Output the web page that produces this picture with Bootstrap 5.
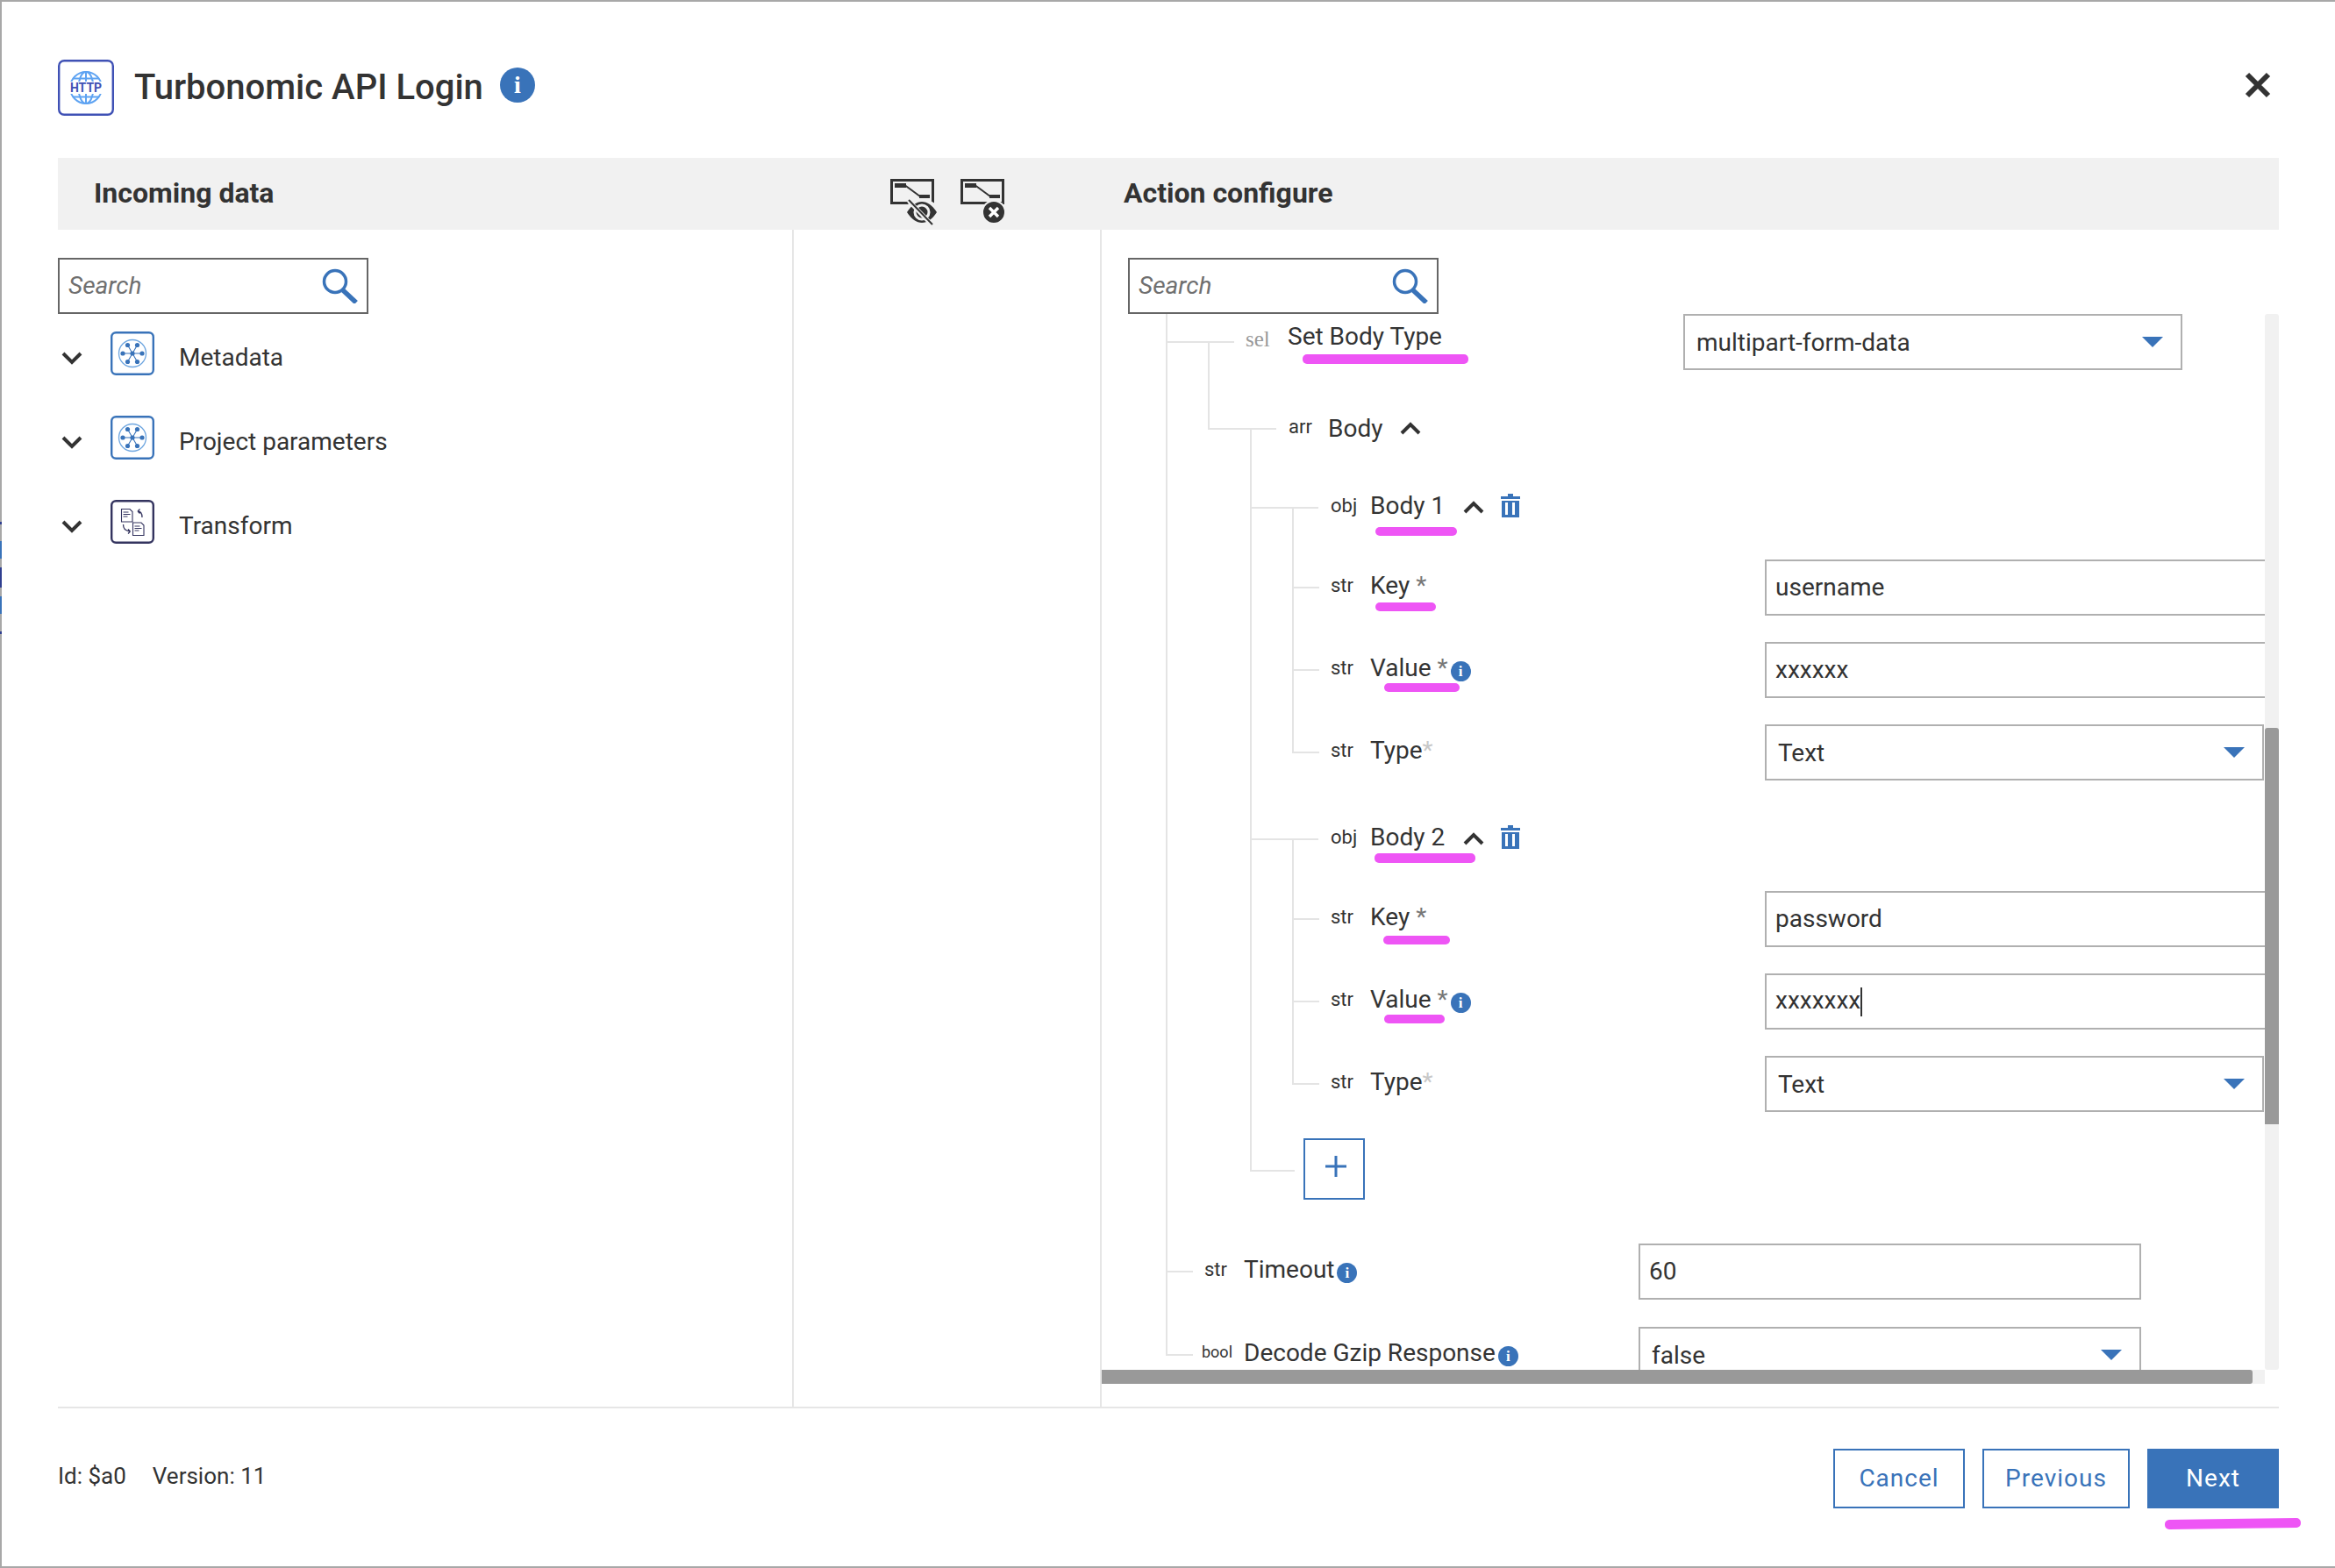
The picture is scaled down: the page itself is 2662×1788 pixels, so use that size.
<!DOCTYPE html>
<html lang="en">
<head>
  <meta charset="UTF-8">
  <title>Turbonomic API Login</title>
  <meta name="viewport" content="width=device-width, initial-scale=1">
  <link href="https://cdn.jsdelivr.net/npm/bootstrap@5.3.2/dist/css/bootstrap.min.css" rel="stylesheet" />
  <style>
    body {
      margin: 0;
      padding: 2px 0 2px 2px;
      height: 100vh;
      font-family: Roboto, "Liberation Sans", sans-serif;
      font-size: 28px;
      color: #333;
      background:
        linear-gradient(#a8a8a8 595px, #2f3f8f 595px, #2f3f8f 598px, #a8a8a8 598px, #a8a8a8 617px, #3973b9 617px, #3973b9 637px, #a8a8a8 637px, #a8a8a8 647px, #2f3f8f 647px, #2f3f8f 670px, #a8a8a8 670px, #a8a8a8 680px, #3973b9 680px, #3973b9 700px, #a8a8a8 700px, #a8a8a8 720px, #2f3f8f 720px, #2f3f8f 723px, #a8a8a8 723px) left top / 2px 100% no-repeat,
        #a8a8a8;
    }
    .dialog-shell {
      height: 100%;
      padding: 0 64px;
      background: #fff;
    }
    .dialog-head { height: 178px; padding-top: 66px; flex: none; }
    .dialog-title { font-size: 40px; font-weight: 500; margin: 0 0 0 23px; color: #333; line-height: 64px; }
    .info-dot {
      display: inline-flex;
      align-items: center;
      justify-content: center;
      flex: none;
      width: 23px;
      height: 23px;
      border-radius: 50%;
      background: #3973b9;
      color: #fff;
      font-family: "Liberation Serif", serif;
      font-weight: 700;
      font-size: 17px;
      line-height: 1;
    }
    .info-dot-lg { width: 40px; height: 40px; font-size: 28px; margin: 9px 0 0 19px; }
    .close-x { margin: 14px 9px 0 auto; }

    .head-band { height: 82px; flex: none; background: #f1f1f1; padding-left: 41px; position: relative; }
    .band-title { font-size: 32px; font-weight: 700; line-height: 80px; color: #333; margin: 0; }
    .band-left { width: 908px; }
    .band-tools { padding-top: 24px; gap: 26px; width: 266px; }

    .panes { flex: 1 1 auto; min-height: 0; border-bottom: 2px solid #e6e6e6; }
    .pane-left { width: 839px; flex: none; border-right: 2px solid #e6e6e6; padding-top: 32px; }
    .pane-mid { width: 351px; flex: none; border-right: 2px solid #e6e6e6; }
    .pane-right { flex: 1 1 auto; min-width: 0; padding: 32px 0 26px; }

    .search-box { width: 354px; height: 64px; flex: none; border: 2px solid #666; padding: 0 9px 0 0; background: #fff; }
    .search-box .form-control { border: 0; border-radius: 0; box-shadow: none; padding: 0 0 0 10px; font-size: 28px; font-style: italic; color: #333; background: transparent; }
    .search-box .form-control::placeholder { color: #6f6f6f; opacity: 1; }
    .search-right { margin-left: 30px; }

    .source-row { height: 50px; margin-bottom: 46px; padding-left: 4px; }
    .source-list { margin-top: 20px; }
    .source-row svg.chev { margin: 10px 32px 0 0; }
    .source-name { margin: 9px 0 0 28px; }

    .tree-view { flex: 1 1 auto; min-width: 0; overflow: hidden; padding-left: 73px; }
    .tree-list { list-style: none; margin: 0; padding: 0; position: relative; width: 1400px; }
    .tree-node { position: relative; padding-bottom: 30px; }
    .tree-node:last-child { padding-bottom: 0; }
    .tree-node::before {
      content: "";
      position: absolute;
      left: 0;
      top: 0;
      width: 31px;
      height: 33px;
      border-left: 2px solid #e4e4e4;
      border-bottom: 2px solid #e4e4e4;
    }
    .tree-node.elbow-long::before { width: 78px; }
    .tree-node.elbow-add::before { width: 51px; height: 38px; }
    .tree-node:not(:last-child)::after {
      content: "";
      position: absolute;
      left: 0;
      top: 0;
      bottom: 0;
      border-left: 2px solid #e4e4e4;
    }
    .sub-list { margin: -32px 0 0 48px; padding-top: calc(32px + var(--lead)); }
    .sub-list::before {
      content: "";
      position: absolute;
      left: 0;
      top: 0;
      height: calc(32px + var(--lead));
      border-left: 2px solid #e4e4e4;
    }
    .lead-35 { --lead: 35px; }
    .lead-26 { --lead: 26px; }
    .lead-27 { --lead: 27px; }
    .pad-35 { padding-bottom: 35px !important; }
    .pad-30 { padding-bottom: 30px !important; }
    .pad-50 { padding-bottom: 50px !important; }
    .pad-31 { padding-bottom: 31px !important; }

    .tree-row { position: relative; height: 64px; padding-left: 44px; }
    .tree-row.long { padding-left: 92px; }
    .tree-row.sel-row { padding-left: 91px; }
    .kind-tag { width: 45px; flex: none; font-size: 22px; color: #333; margin-bottom: 5px; }
    .kind-sel { width: 48px; font-family: "Liberation Serif", serif; font-size: 25px; color: #999; margin-bottom: 6px; }
    .kind-bool { width: 48px; margin-left: -3px; font-size: 18px; margin-bottom: 8px; }
    .row-text { width: 450px; flex: none; margin-bottom: 4px; }
    .sel-row .row-text { width: 451px; margin-bottom: 12px; }
    .row-star { color: #777; margin-left: 7px; }
    .row-star-soft { color: #c8c8c8; }
    .body-name { width: 106px; margin-bottom: 4px; }
    .arr-name { margin-right: 20px; }
    .trash-btn { margin: 0 0 6px 19px; }
    .row-text .info-dot { margin-left: 3px; margin-top: 7px; }

    .field-input, .field-select {
      width: 569px;
      height: 64px;
      flex: none;
      border: 2px solid #b0b0b0;
      border-radius: 0;
      box-shadow: none;
      font-size: 28px;
      color: #333;
      padding: 0 10px 2px;
      line-height: 58px;
    }
    .field-select {
      padding: 2px 60px 0 13px;
      background-image: url("data:image/svg+xml,%3Csvg xmlns='http://www.w3.org/2000/svg' width='24' height='12'%3E%3Cpath d='M0 0h24L12 12z' fill='%233973b9'/%3E%3C/svg%3E");
      background-size: 24px 12px;
      background-position: right 20px center;
    }
    .field-clip { width: 620px; }
    .field-wide { width: 573px; }
    .caret-bar { display: inline-block; width: 2px; height: 33px; background: #333; vertical-align: middle; }

    .add-btn {
      width: 70px;
      height: 70px;
      margin-left: 61px;
      padding: 0 0 6px 4px;
      border: 2px solid #3973b9;
      border-radius: 0;
      background: #fff;
    }
    .tree-row-add { height: 70px; }

    .scroll-y { width: 16px; flex: none; background: #f1f1f1; border-radius: 3px; }
    .scroll-y-thumb { width: 16px; height: 452px; margin-top: 472px; background: #999; border-radius: 3px 3px 0 0; }
    .scroll-x { height: 16px; flex: none; margin-right: 16px; background: #f1f1f1; }
    .scroll-x-thumb { height: 16px; width: 1312px; background: #999; border-radius: 0 3px 3px 0; }

    .dialog-foot { height: 180px; flex: none; padding-top: 46px; }
    .foot-meta { font-size: 26px; margin-top: -3px; height: 68px; }
    .foot-meta span + span { margin-left: 30px; }
    .foot-btns { gap: 20px; }
    .btn-dialog {
      position: relative;
      height: 68px;
      padding: 0;
      border: 2px solid #3973b9;
      border-radius: 0;
      background: #fff;
      color: #3973b9;
      font-size: 28px;
      letter-spacing: 1px;
    }
    .btn-next { background: #3973b9; color: #fff; }
    .w-cancel { width: 150px; }
    .w-prev { width: 168px; }

    .scribble { position: absolute; height: 10px; background: #ee55f5; border-radius: 5px; }
    .scr-set { left: 156px; top: 46px; width: 189px; height: 11px; }
    .scr-b1 { left: 143px; top: 54px; width: 93px; }
    .scr-k1 { left: 95px; top: 49px; width: 69px; }
    .scr-v1 { left: 105px; top: 47px; width: 86px; }
    .scr-b2 { left: 142px; top: 48px; width: 115px; height: 11px; }
    .scr-k2 { left: 104px; top: 51px; width: 76px; }
    .scr-v2 { left: 105px; top: 47px; width: 69px; }
    .scr-next { left: 18px; top: 78px; width: 155px; height: 11px; transform: rotate(-0.8deg); }
  </style>
</head>
<body>

<div class="dialog-shell d-flex flex-column">

  <div class="dialog-head d-flex align-items-start">
    <svg width="64" height="64" viewBox="0 0 64 64">
      <rect x="1.2" y="1.2" width="61.6" height="61.6" rx="6" fill="#fff" stroke="#3f51b5" stroke-width="2.4"/>
      <g fill="none" stroke="#5ea3f2" stroke-width="2">
        <circle cx="32" cy="32" r="18"/>
        <ellipse cx="32" cy="32" rx="8.5" ry="18"/>
        <path d="M32 14v36M17 21.500h30M17 42.500h30"/>
      </g>
      <rect x="10" y="25" width="44" height="14" fill="#fff"/>
      <text x="32" y="37" text-anchor="middle" font-family="Roboto, sans-serif" font-weight="700" font-size="14" fill="#3f51b5">HTTP</text>
    </svg>
    <h1 class="dialog-title">Turbonomic API Login</h1>
    <span class="info-dot info-dot-lg">i</span>
    <svg class="close-x" width="30" height="30" viewBox="0 0 30 30"><path d="M3 3l24 24M27 3L3 27" stroke="#333" stroke-width="6" fill="none"/></svg>
  </div>

  <div class="head-band d-flex">
    <div class="band-left"><h2 class="band-title">Incoming data</h2></div>
    <div class="band-tools d-flex align-items-start">
      <svg width="54" height="56" viewBox="0 0 54 56">
        <rect x="1.500" y="1.500" width="47" height="26" fill="none" stroke="#333" stroke-width="3"/>
        <path d="M5 5h13v5H5zM33 18h12v4H33z" fill="#333"/>
        <path d="M17 7.500L34 20" stroke="#333" stroke-width="2" fill="none"/>
        <ellipse cx="36" cy="38" rx="20" ry="15" fill="#f1f1f1"/>
        <path d="M19 38c5-8 11-12 17-12s12 4 17 12c-5 8-11 12-17 12s-12-4-17-12z" fill="#333"/>
        <circle cx="36" cy="38" r="8" fill="none" stroke="#f1f1f1" stroke-width="3"/>
        <path d="M21 25l27 28" stroke="#f1f1f1" stroke-width="5"/>
        <path d="M21 24l27 28" stroke="#333" stroke-width="2"/>
      </svg>
      <svg width="54" height="56" viewBox="0 0 54 56">
        <rect x="1.500" y="1.500" width="47" height="26" fill="none" stroke="#333" stroke-width="3"/>
        <path d="M5 5h13v5H5zM33 18h12v4H33z" fill="#333"/>
        <path d="M17 7.500L34 20" stroke="#333" stroke-width="2" fill="none"/>
        <circle cx="38" cy="38" r="13" fill="#333" stroke="#f1f1f1" stroke-width="2"/>
        <path d="M33 33l10 10M43 33L33 43" stroke="#fff" stroke-width="3.400"/>
      </svg>
    </div>
    <h2 class="band-title">Action configure</h2>
  </div>

  <div class="panes d-flex">
    <div class="pane-left">
      <div class="search-box d-flex align-items-center">
        <input class="form-control" type="text" placeholder="Search">
        <svg class="flex-shrink-0" width="42" height="40" viewBox="0 0 42 40"><circle cx="15" cy="15" r="12.500" fill="none" stroke="#3973b9" stroke-width="3.500"/><path d="M24 25l15 14" stroke="#3973b9" stroke-width="5.500"/></svg>
      </div>
      <div class="source-list">
        <div class="source-row d-flex align-items-center">
          <svg class="chev" width="24" height="16" viewBox="0 0 24 16"><path d="M2 3l10 10L22 3" fill="none" stroke="#333" stroke-width="4"/></svg>
          <svg width="50" height="50" viewBox="0 0 50 50" class="flex-shrink-0">
            <rect x="1.200" y="1.200" width="47.600" height="47.600" rx="5" fill="#fff" stroke="#3973b9" stroke-width="2.400"/>
            <circle cx="25" cy="25" r="15.500" fill="none" stroke="#6ea6e0" stroke-width="1.300"/>
            <path d="M25 25L14 25M25 25L36 25M25 25L19.500 15.500M25 25L30.500 15.500M25 25L19.500 34.500M25 25L30.500 34.500" stroke="#3973b9" stroke-width="1.100"/>
            <g fill="#3973b9"><circle cx="25" cy="25" r="2.600"/><circle cx="14" cy="25" r="2.600"/><circle cx="36" cy="25" r="2.600"/><circle cx="19.500" cy="15.500" r="2.600"/><circle cx="30.500" cy="15.500" r="2.600"/><circle cx="19.500" cy="34.500" r="2.600"/><circle cx="30.500" cy="34.500" r="2.600"/></g>
          </svg>
          <span class="source-name">Metadata</span>
        </div>
        <div class="source-row d-flex align-items-center">
          <svg class="chev" width="24" height="16" viewBox="0 0 24 16"><path d="M2 3l10 10L22 3" fill="none" stroke="#333" stroke-width="4"/></svg>
          <svg width="50" height="50" viewBox="0 0 50 50" class="flex-shrink-0">
            <rect x="1.200" y="1.200" width="47.600" height="47.600" rx="5" fill="#fff" stroke="#3973b9" stroke-width="2.400"/>
            <circle cx="25" cy="25" r="15.500" fill="none" stroke="#6ea6e0" stroke-width="1.300"/>
            <path d="M25 25L14 25M25 25L36 25M25 25L19.500 15.500M25 25L30.500 15.500M25 25L19.500 34.500M25 25L30.500 34.500" stroke="#3973b9" stroke-width="1.100"/>
            <g fill="#3973b9"><circle cx="25" cy="25" r="2.600"/><circle cx="14" cy="25" r="2.600"/><circle cx="36" cy="25" r="2.600"/><circle cx="19.500" cy="15.500" r="2.600"/><circle cx="30.500" cy="15.500" r="2.600"/><circle cx="19.500" cy="34.500" r="2.600"/><circle cx="30.500" cy="34.500" r="2.600"/></g>
          </svg>
          <span class="source-name">Project parameters</span>
        </div>
        <div class="source-row d-flex align-items-center">
          <svg class="chev" width="24" height="16" viewBox="0 0 24 16"><path d="M2 3l10 10L22 3" fill="none" stroke="#333" stroke-width="4"/></svg>
          <svg width="50" height="50" viewBox="0 0 50 50" class="flex-shrink-0">
            <rect x="1.200" y="1.200" width="47.600" height="47.600" rx="5" fill="#fff" stroke="#34345f" stroke-width="2.400"/>
            <g fill="#fff" stroke="#34345f" stroke-width="1.100">
              <path d="M12.500 10.500h9.500l3 3v11.500h-12.500z"/>
              <path d="M25.500 26h9.500l3 3v11.500h-12.500z"/>
            </g>
            <path d="M14.500 14h6M14.500 16.500h8M14.500 19h5M27.500 30h6M27.500 32.500h8M27.500 35h5" stroke="#34345f" stroke-width="1"/>
            <path d="M31 13c3 0 5 2 5 7M31 13l2.500-2.500M31 13l2.500 2.500M14.500 28c0 5 2 7 8 8M22.500 36l-2.500-2.500M22.500 36l-2.500 2.500" fill="none" stroke="#34345f" stroke-width="1.300"/>
          </svg>
          <span class="source-name">Transform</span>
        </div>
      </div>
    </div>

    <div class="pane-mid"></div>

    <div class="pane-right d-flex flex-column">
      <div class="search-box search-right d-flex align-items-center">
        <input class="form-control" type="text" placeholder="Search">
        <svg class="flex-shrink-0" width="42" height="40" viewBox="0 0 42 40"><circle cx="15" cy="15" r="12.500" fill="none" stroke="#3973b9" stroke-width="3.500"/><path d="M24 25l15 14" stroke="#3973b9" stroke-width="5.500"/></svg>
      </div>

      <div class="d-flex flex-grow-1 overflow-hidden">
        <div class="tree-view">
          <ul class="tree-list">
            <li class="tree-node elbow-long pad-50">
              <div class="tree-row sel-row d-flex align-items-center">
                <span class="kind-tag kind-sel">sel</span>
                <span class="row-text">Set Body Type</span>
                <select class="form-select field-select"><option>multipart-form-data</option></select>
                <span class="scribble scr-set"></span>
              </div>
              <ul class="tree-list sub-list lead-35">
                <li class="tree-node elbow-long">
                  <div class="tree-row long d-flex align-items-center">
                    <span class="kind-tag">arr</span>
                    <span class="arr-name">Body</span>
                    <svg width="24" height="16" viewBox="0 0 24 16"><path d="M2 13L12 3l10 10" fill="none" stroke="#333" stroke-width="4"/></svg>
                  </div>
                  <ul class="tree-list sub-list lead-26">
                    <li class="tree-node elbow-long pad-35">
                      <div class="tree-row long d-flex align-items-center">
                        <span class="kind-tag">obj</span>
                        <span class="body-name">Body 1</span>
                        <svg width="24" height="16" viewBox="0 0 24 16"><path d="M2 13L12 3l10 10" fill="none" stroke="#333" stroke-width="4"/></svg>
                        <svg class="trash-btn" width="22" height="27" viewBox="0 0 22 27"><path d="M0 3h22v3H0zM8 0h6v3H8z" fill="#3973b9"/><path d="M1 8h20v19H1z" fill="#3973b9"/><path d="M5 10h3v14H5zM13 10h3v14h-3z" fill="#fff"/></svg>
                        <span class="scribble scr-b1"></span>
                      </div>
                      <ul class="tree-list sub-list lead-27">
                        <li class="tree-node">
                          <div class="tree-row d-flex align-items-center">
                            <span class="kind-tag">str</span>
                            <span class="row-text">Key<span class="row-star">*</span></span>
                            <input class="form-control field-input field-clip" type="text" value="username">
                            <span class="scribble scr-k1"></span>
                          </div>
                        </li>
                        <li class="tree-node">
                          <div class="tree-row d-flex align-items-center">
                            <span class="kind-tag">str</span>
                            <span class="row-text d-flex align-items-center">Value<span class="row-star">*</span><span class="info-dot">i</span></span>
                            <input class="form-control field-input field-clip" type="text" value="xxxxxx">
                            <span class="scribble scr-v1"></span>
                          </div>
                        </li>
                        <li class="tree-node">
                          <div class="tree-row d-flex align-items-center">
                            <span class="kind-tag">str</span>
                            <span class="row-text">Type<span class="row-star-soft">*</span></span>
                            <select class="form-select field-select"><option>Text</option></select>
                          </div>
                        </li>
                      </ul>
                    </li>
                    <li class="tree-node elbow-long pad-30">
                      <div class="tree-row long d-flex align-items-center">
                        <span class="kind-tag">obj</span>
                        <span class="body-name">Body 2</span>
                        <svg width="24" height="16" viewBox="0 0 24 16"><path d="M2 13L12 3l10 10" fill="none" stroke="#333" stroke-width="4"/></svg>
                        <svg class="trash-btn" width="22" height="27" viewBox="0 0 22 27"><path d="M0 3h22v3H0zM8 0h6v3H8z" fill="#3973b9"/><path d="M1 8h20v19H1z" fill="#3973b9"/><path d="M5 10h3v14H5zM13 10h3v14h-3z" fill="#fff"/></svg>
                        <span class="scribble scr-b2"></span>
                      </div>
                      <ul class="tree-list sub-list lead-27">
                        <li class="tree-node">
                          <div class="tree-row d-flex align-items-center">
                            <span class="kind-tag">str</span>
                            <span class="row-text">Key<span class="row-star">*</span></span>
                            <input class="form-control field-input field-clip" type="text" value="password">
                            <span class="scribble scr-k2"></span>
                          </div>
                        </li>
                        <li class="tree-node">
                          <div class="tree-row d-flex align-items-center">
                            <span class="kind-tag">str</span>
                            <span class="row-text d-flex align-items-center">Value<span class="row-star">*</span><span class="info-dot">i</span></span>
                            <div class="form-control field-input field-clip">xxxxxxx<span class="caret-bar"></span></div>
                            <span class="scribble scr-v2"></span>
                          </div>
                        </li>
                        <li class="tree-node">
                          <div class="tree-row d-flex align-items-center">
                            <span class="kind-tag">str</span>
                            <span class="row-text">Type<span class="row-star-soft">*</span></span>
                            <select class="form-select field-select"><option>Text</option></select>
                          </div>
                        </li>
                      </ul>
                    </li>
                    <li class="tree-node elbow-add">
                      <div class="tree-row-add d-flex align-items-center">
                        <button class="btn add-btn d-flex align-items-center justify-content-center" type="button">
                          <svg width="24" height="24" viewBox="0 0 24 24"><path d="M12 0v24M0 12h24" stroke="#3973b9" stroke-width="3"/></svg>
                        </button>
                      </div>
                    </li>
                  </ul>
                </li>
              </ul>
            </li>
            <li class="tree-node pad-31">
              <div class="tree-row d-flex align-items-center">
                <span class="kind-tag">str</span>
                <span class="row-text d-flex align-items-center">Timeout<span class="info-dot">i</span></span>
                <input class="form-control field-input field-wide" type="text" value="60">
              </div>
            </li>
            <li class="tree-node">
              <div class="tree-row d-flex align-items-center">
                <span class="kind-tag kind-bool">bool</span>
                <span class="row-text d-flex align-items-center">Decode Gzip Response<span class="info-dot">i</span></span>
                <select class="form-select field-select field-wide"><option>false</option></select>
              </div>
            </li>
          </ul>
        </div>
        <div class="scroll-y"><div class="scroll-y-thumb"></div></div>
      </div>
      <div class="scroll-x"><div class="scroll-x-thumb"></div></div>
    </div>
  </div>

  <div class="dialog-foot d-flex justify-content-between align-items-start">
    <div class="foot-meta d-flex align-items-center"><span>Id: $a0</span><span>Version: 11</span></div>
    <div class="foot-btns d-flex">
      <button class="btn btn-dialog w-cancel" type="button">Cancel</button>
      <button class="btn btn-dialog w-prev" type="button">Previous</button>
      <button class="btn btn-dialog btn-next w-cancel" type="button">Next<span class="scribble scr-next"></span></button>
    </div>
  </div>

</div>

<script src="https://cdn.jsdelivr.net/npm/bootstrap@5.3.2/dist/js/bootstrap.bundle.min.js"></script>
</body>
</html>
